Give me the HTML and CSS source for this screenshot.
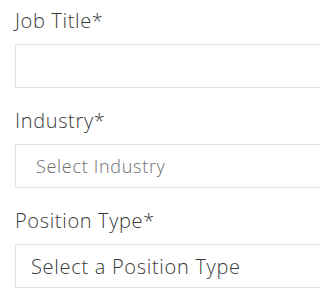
FILE: index.html
```html
<!DOCTYPE html>
<html>
<head>
<meta charset="utf-8">
<link rel="stylesheet" href="styles.css">
</head>
<body>
<form class="form">
  <div class="group">
    <label class="label">Job Title*</label>
    <div class="field"></div>
  </div>
  <div class="group">
    <label class="label">Industry*</label>
    <div class="field field-select placeholder">Select Industry</div>
  </div>
  <div class="group">
    <label class="label">Position Type*</label>
    <div class="field field-select value">Select a Position Type</div>
  </div>
</form>
</body>
</html>
```
FILE: styles.css
```css
html, body {
  margin: 0;
  padding: 0;
  background: #ffffff;
  overflow: hidden;
}
body {
  font-family: "Open Sans", "Liberation Sans", sans-serif;
  color: #444444;
}
.form {
  display: flex;
  flex-direction: column;
  gap: 12px;
  padding-left: 15px;
}
.group {
  display: flex;
  flex-direction: column;
}
.label {
  height: 44px;
  font-size: 20px;
  font-weight: 350;
  line-height: 42px;
  letter-spacing: 0.65px;
  color: #3a3a3a;
}
.field {
  box-sizing: border-box;
  width: 320px;
  height: 44px;
  border: 1px solid #e2e2e2;
  background: #fff;
  display: flex;
  align-items: center;
}
.placeholder {
  padding-left: 20px;
  font-size: 18px;
  font-weight: 350;
  letter-spacing: 0.7px;
  color: #6e6e6e;
}
.value {
  padding-left: 15px;
  font-size: 20px;
  font-weight: 350;
  letter-spacing: 0.7px;
  color: #3a3a3a;
}
```
